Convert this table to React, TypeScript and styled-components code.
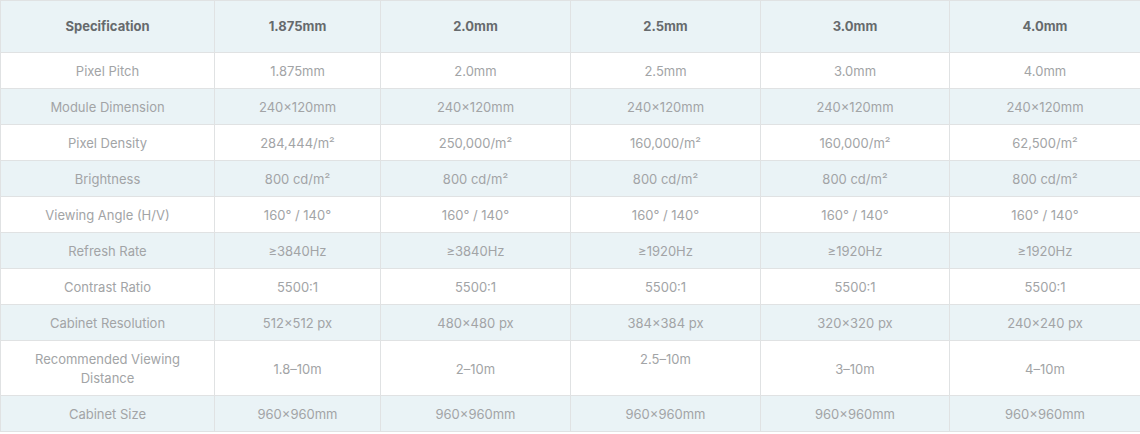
import styled, { createGlobalStyle } from "styled-components";

const GlobalStyle = createGlobalStyle`
  html, body {
    margin: 0;
    padding: 0;
    background: #ffffff;
  }
  body {
    font-family: Inter, "Noto Sans", sans-serif;
  }
`;

const Table = styled.table`
  width: 1140px;
  table-layout: fixed;
  border-collapse: collapse;
  border: 1px solid #e0e2e3;
  font-size: 13px;
  line-height: 19px;
`;

const HeadCell = styled.th`
  background: #eaf3f6;
  color: #666a6d;
  font-weight: 700;
  padding: 16px 8px;
  border: 1px solid #e0e2e3;
  text-align: center;
`;

const Row = styled.tr<{ $striped: boolean }>`
  background: ${(p) => (p.$striped ? "#eaf3f6" : "#ffffff")};
`;

const Cell = styled.td<{ $top?: boolean }>`
  color: #a2a4a6;
  font-weight: 400;
  padding: 9px 16px 7px;
  border: 1px solid #e0e2e3;
  text-align: center;
  vertical-align: ${(p) => (p.$top ? "top" : "middle")};
`;

const columns = ["Specification", "1.875mm", "2.0mm", "2.5mm", "3.0mm", "4.0mm"];
const widths = [214, 166, 190, 190, 189, 191];

const rows: string[][] = [
  ["Pixel Pitch", "1.875mm", "2.0mm", "2.5mm", "3.0mm", "4.0mm"],
  ["Module Dimension", "240×120mm", "240×120mm", "240×120mm", "240×120mm", "240×120mm"],
  ["Pixel Density", "284,444/m²", "250,000/m²", "160,000/m²", "160,000/m²", "62,500/m²"],
  ["Brightness", "800 cd/m²", "800 cd/m²", "800 cd/m²", "800 cd/m²", "800 cd/m²"],
  ["Viewing Angle (H/V)", "160° / 140°", "160° / 140°", "160° / 140°", "160° / 140°", "160° / 140°"],
  ["Refresh Rate", "≥3840Hz", "≥3840Hz", "≥1920Hz", "≥1920Hz", "≥1920Hz"],
  ["Contrast Ratio", "5500:1", "5500:1", "5500:1", "5500:1", "5500:1"],
  ["Cabinet Resolution", "512×512 px", "480×480 px", "384×384 px", "320×320 px", "240×240 px"],
  ["Recommended Viewing Distance", "1.8–10m", "2–10m", "2.5–10m", "3–10m", "4–10m"],
  ["Cabinet Size", "960×960mm", "960×960mm", "960×960mm", "960×960mm", "960×960mm"],
];

export default function App() {
  return (
    <>
      <GlobalStyle />
      <Table>
        <colgroup>
          {widths.map((w, i) => (
            <col key={i} style={{ width: w }} />
          ))}
        </colgroup>
        <thead>
          <tr>
            {columns.map((c) => (
              <HeadCell key={c}>{c}</HeadCell>
            ))}
          </tr>
        </thead>
        <tbody>
          {rows.map((r, ri) => (
            <Row key={r[0]} $striped={ri % 2 === 1}>
              {r.map((v, ci) => (
                <Cell key={ci} $top={v === "2.5–10m"}>
                  {v}
                </Cell>
              ))}
            </Row>
          ))}
        </tbody>
      </Table>
    </>
  );
}
